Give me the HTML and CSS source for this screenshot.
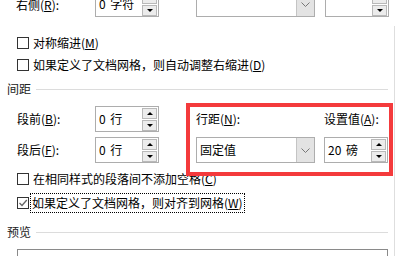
FILE: index.html
```html
<!DOCTYPE html>
<html lang="zh-CN">
<head>
<meta charset="utf-8">
<link rel="stylesheet" href="styles.css">
</head>
<body>
<div class="top">
  <span class="label">右侧(<u>R</u>):</span>
  <div class="spin"><span class="val">0 字符</span><span class="btns"><span class="btn up"></span><span class="btn down"></span></span></div>
  <div class="combo top-combo"><span class="val"></span><span class="arrow"><svg width="9" height="5" viewBox="0 0 9 5"><polyline points="0.5,0.5 4.5,4.5 8.5,0.5" fill="none" stroke="#777" stroke-width="1"/></svg></span></div>
  <div class="spin top-spin2"><span class="val"></span><span class="btns"><span class="btn up"></span><span class="btn down"></span></span></div>
</div>
<div class="main">
  <label class="check row1"><span class="box"></span><span class="text">对称缩进(<u>M</u>)</span></label>
  <label class="check row2"><span class="box"></span><span class="text">如果定义了文档网格，则自动调整右缩进(<u>D</u>)</span></label>
  <div class="section first"><span>间距</span><span class="rule"></span></div>
  <div class="spacing">
    <div class="left">
      <div class="field"><span class="label">段前(<u>B</u>):</span><div class="spin"><span class="val">0 行</span><span class="btns"><span class="btn up"></span><span class="btn down"></span></span></div></div>
      <div class="field"><span class="label">段后(<u>F</u>):</span><div class="spin"><span class="val">0 行</span><span class="btns"><span class="btn up"></span><span class="btn down"></span></span></div></div>
    </div>
    <div class="right">
      <div class="col wide">
        <span class="clabel">行距(<u>N</u>):</span>
        <div class="combo"><span class="val">固定值</span><span class="arrow"><svg width="9" height="5" viewBox="0 0 9 5"><polyline points="0.5,0.5 4.5,4.5 8.5,0.5" fill="none" stroke="#777" stroke-width="1"/></svg></span></div>
      </div>
      <div class="col">
        <span class="clabel">设置值(<u>A</u>):</span>
        <div class="spin"><span class="val">20 磅</span><span class="btns"><span class="btn up"></span><span class="btn down"></span></span></div>
      </div>
    </div>
  </div>
  <label class="check row3"><span class="box"></span><span class="text">在相同样式的段落间不添加空格(<u>C</u>)</span></label>
  <label class="check row4"><span class="box checked"><svg width="10" height="10" viewBox="0 0 10 10"><polyline points="1.5,5 4,7.5 8.8,2" fill="none" stroke="#666" stroke-width="1.3"/></svg></span><span class="text focus">如果定义了文档网格，则对齐到网格(<u>W</u>)</span></label>
  <div class="section second"><span>预览</span><span class="rule"></span></div>
  <div class="preview"></div>
</div>
<div class="highlight"></div>
</body>
</html>
```
FILE: styles.css
```css
html, body {
  margin: 0;
  padding: 0;
}
body {
  width: 400px;
  height: 256px;
  overflow: hidden;
  position: relative;
  background: #fff;
  color: #000;
  font-family: "Noto Sans CJK SC", "Noto Sans", sans-serif;
  font-size: 12px;
  line-height: 1;
}
u {
  text-decoration: underline;
  text-underline-offset: 1px;
}
.top {
  display: flex;
  align-items: center;
  margin-top: -9px;
  height: 26px;
}
.top .label {
  width: 79px;
  padding-left: 16px;
  padding-top: 2px;
}
.top-combo {
  margin-left: 37px;
}
.top-spin2 {
  margin-left: 10px;
}
.spin {
  box-sizing: border-box;
  width: 64px;
  height: 26px;
  border: 1px solid #adadad;
  background: #fff;
  display: flex;
  align-items: center;
  padding-left: 3px;
}
.spin .val {
  word-spacing: 2px;
}
.spin .btns {
  margin-left: auto;
  margin-right: 1px;
  display: flex;
  flex-direction: column;
  gap: 1px;
}
.btn {
  box-sizing: border-box;
  width: 15px;
  height: 11px;
  border: 1px solid #b9b9b9;
  background: #ececec;
  display: flex;
  align-items: center;
  justify-content: center;
}
.btn::after {
  content: "";
  width: 0;
  height: 0;
  border-left: 3px solid transparent;
  border-right: 3px solid transparent;
}
.btn.up::after {
  border-bottom: 3px solid #000;
}
.btn.down::after {
  border-top: 3px solid #000;
}
.combo {
  box-sizing: border-box;
  width: 119px;
  height: 26px;
  border: 1px solid #adadad;
  display: flex;
  align-items: stretch;
}
.combo .val {
  flex: 1;
  display: flex;
  align-items: center;
  padding-left: 3px;
}
.combo .arrow {
  width: 17px;
  background: #e3e3e3;
  border-left: 1px solid #c4c4c4;
  display: flex;
  align-items: center;
  justify-content: center;
}
.main {
  box-sizing: border-box;
  width: 395px;
  height: 230px;
  overflow: hidden;
  margin-top: 9px;
  border-right: 1px solid #dedede;
  padding-top: 7px;
}
.check {
  display: flex;
  align-items: center;
  height: 20px;
  padding-left: 17px;
}
.check .box {
  box-sizing: border-box;
  width: 12px;
  height: 12px;
  border: 1px solid #333;
  background: #fff;
  margin-right: 3px;
  display: flex;
  align-items: center;
  justify-content: center;
}
.check .text {
  padding: 0 1px;
}
.row2 { margin-top: 2px; }
.section {
  display: flex;
  align-items: center;
  height: 16px;
  padding-left: 7px;
  color: #222;
}
.section .rule {
  flex: 1;
  height: 1px;
  background: #dcdcdc;
  margin-left: 5px;
  margin-right: 6px;
}
.section.first { margin-top: 6px; }
.spacing {
  display: flex;
  margin-top: 9px;
}
.left {
  width: 186px;
  display: flex;
  flex-direction: column;
  gap: 5px;
}
.field {
  display: flex;
  align-items: center;
  height: 26px;
}
.field .label {
  box-sizing: border-box;
  width: 95px;
  padding-left: 17px;
}
.right {
  display: flex;
  padding-left: 10px;
  gap: 9px;
}
.col {
  display: flex;
  flex-direction: column;
  gap: 5px;
}
.clabel {
  height: 26px;
  display: flex;
  align-items: center;
}
.row3 { margin-top: 6px; }
.row4 { margin-top: 4px; }
.focus {
  box-sizing: border-box;
  height: 20px;
  display: flex;
  align-items: center;
  border: 1px dotted #000;
  margin-left: -2px;
  padding: 0 2px;
}
.section.second { margin-top: 11px; }
.preview {
  margin-top: 9px;
  margin-left: 17px;
  margin-right: 6px;
  height: 20px;
  border: 1px solid #8a8a8a;
}
.highlight {
  position: absolute;
  left: 186px;
  top: 103px;
  width: 207px;
  height: 73px;
  box-sizing: border-box;
  border: 4px solid #f43a3c;
}
```
